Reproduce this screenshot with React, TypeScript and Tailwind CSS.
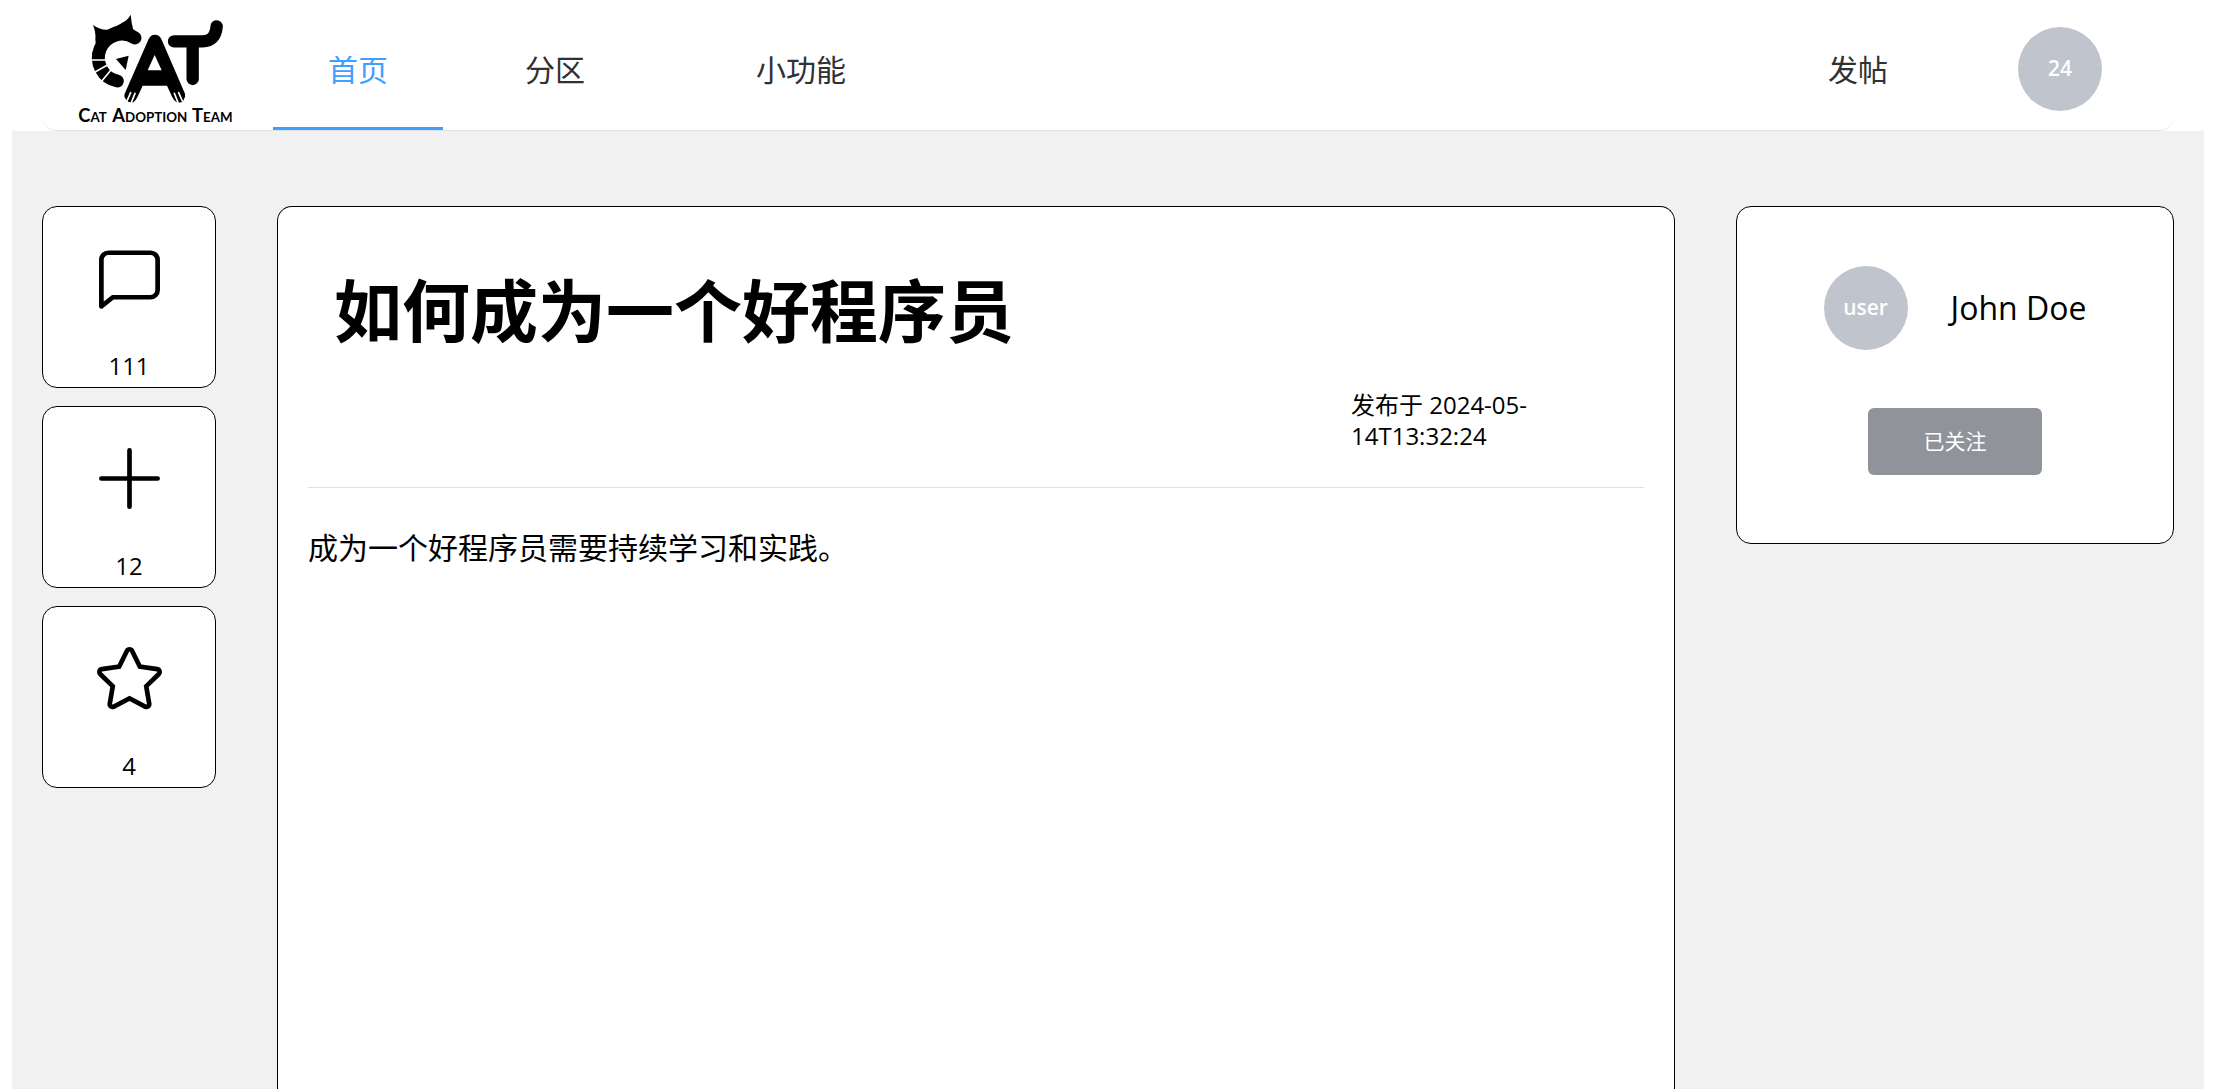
import type { ReactNode } from "react";

function Logo() {
  return (
    <svg viewBox="0 0 510 366" className="h-[122px] w-[170px] shrink-0" role="img" aria-label="Cat Adoption Team">
      {/* C: curled cat with ears, collar stripes and nose */}
      <path d="M195 90A71 71 0 1 0 142 219" fill="none" stroke="#000" strokeWidth="39" strokeLinecap="round" />
      <path d="M69 51Q90 66 112 65L130 57Q150 50 156 44Q172 38 182 20Q184 42 189 62L196 72L150 84L78 120L76 92Q78 74 69 51Z" />
      <path d="M60 156H106M70 195L114 170M95 220L126 182" stroke="#fff" strokeWidth="5" />
      <path d="M138 153L176 143L167 186Z" />
      {/* A: legs with paws */}
      <path
        fillRule="evenodd"
        d="M236 93Q242 80 255 80Q268 80 274 93L345 257Q347 268 342 272Q340 283 331 283Q325 286 318 281Q312 278 307 268L291 233H218L202 268Q197 278 192 281Q186 286 179 282Q171 284 168 274Q161 268 164 257ZM254 141L233 187H275Z"
      />
      <path d="M182 254L171 279M195 256L184 284M326 254L337 279M313 256L324 284" stroke="#fff" strokeWidth="5" strokeLinecap="round" />
      {/* T: tail */}
      <path d="M312 100H398Q436 100 440 55M368 100V213" fill="none" stroke="#000" strokeWidth="37" strokeLinecap="round" />
      <g className="font-['Lato'] font-bold" fontSize="40">
        <text x="25" y="341"><tspan fontSize="55">C</tspan>AT</text>
        <text x="127" y="341"><tspan fontSize="55">A</tspan>DOPTION</text>
        <text x="366" y="341"><tspan fontSize="55">T</tspan>EAM</text>
      </g>
    </svg>
  );
}

const icons = {
  chat: "M273.536 736H800a64 64 0 0 0 64-64V256a64 64 0 0 0-64-64H224a64 64 0 0 0-64 64v570.88L273.536 736zM296 800 147.968 918.4A32 32 0 0 1 96 893.44V256a128 128 0 0 1 128-128h576a128 128 0 0 1 128 128v416a128 128 0 0 1-128 128H296z",
  plus: "M480 480V128a32 32 0 0 1 64 0v352h352a32 32 0 1 1 0 64H544v352a32 32 0 1 1-64 0V544H128a32 32 0 0 1 0-64z",
  star: "m512 747.84 228.16 119.936a6.4 6.4 0 0 0 9.28-6.72l-43.52-254.08 184.512-179.904a6.4 6.4 0 0 0-3.52-10.88l-255.104-37.12L517.76 147.904a6.4 6.4 0 0 0-11.52 0L392.192 379.072l-255.104 37.12a6.4 6.4 0 0 0-3.52 10.88L318.08 606.976l-43.584 254.08a6.4 6.4 0 0 0 9.28 6.72L512 747.84zM313.6 924.48a70.4 70.4 0 0 1-102.144-74.24l37.888-220.928L88.96 472.96A70.4 70.4 0 0 1 128 352.896l221.76-32.256 99.2-200.96a70.4 70.4 0 0 1 126.208 0l99.2 200.96 221.824 32.256a70.4 70.4 0 0 1 39.04 120.064L774.72 629.376l37.888 220.928a70.4 70.4 0 0 1-102.144 74.24L512 820.096l-198.4 104.32z",
};

function ActionCard({ icon, count, label }: { icon: keyof typeof icons; count: number; label: string }) {
  return (
    <button
      type="button"
      aria-label={`${label} ${count}`}
      className="flex h-[182px] flex-col items-center justify-between rounded-[15px] border border-black bg-white pt-[34px] pb-[5px]"
    >
      <svg viewBox="0 0 1024 1024" className="size-[75px]" fill="currentColor" aria-hidden="true">
        <path d={icons[icon]} />
      </svg>
      <span className="text-2xl leading-8">{count}</span>
    </button>
  );
}

function Avatar({ children }: { children: ReactNode }) {
  return (
    <span className="flex size-[84px] shrink-0 items-center justify-center rounded-full bg-[#c0c4cc] text-[21px] text-white">
      {children}
    </span>
  );
}

export default function App() {
  return (
    <div className="flex min-h-screen flex-col bg-white pr-[11px] pl-3 font-['Open_Sans','Noto_Sans_CJK_SC',sans-serif] text-black">
      <header className="mx-[30px] flex h-[131px] items-stretch rounded-[15px] border-b border-[#dcdfe6] pr-[72px] pl-7">
        <a href="#home" className="mt-2 mr-[33px]">
          <Logo />
        </a>
        <nav className="flex flex-1 text-[30px] text-[#303133]">
          <a href="#home" aria-current="page" className="flex w-[170px] items-center justify-center border-b-[3px] border-[#409eff] pt-3 text-[#409eff]">
            首页
          </a>
          <a href="#sections" className="flex w-[224px] items-center justify-center pt-[9px]">
            分区
          </a>
          <a href="#tools" className="flex w-[268px] items-center justify-center pt-[9px]">
            小功能
          </a>
          <a href="#post" className="ml-auto flex w-[170px] items-center justify-center pt-[9px]">
            发帖
          </a>
        </nav>
        <a href="#me" className="ml-[75px] flex items-center pt-2">
          <Avatar>
            <span className="font-semibold">24</span>
          </Avatar>
        </a>
      </header>

      <main className="grid flex-1 grid-cols-[174px_1fr_438px] gap-[61px] bg-[#f1f1f1] px-[30px] pt-[75px]">
        <aside className="flex flex-col gap-[18px]">
          <ActionCard icon="chat" count={111} label="评论" />
          <ActionCard icon="plus" count={12} label="点赞" />
          <ActionCard icon="star" count={4} label="收藏" />
        </aside>

        <article className="flex flex-col rounded-t-[15px] border border-b-0 border-black bg-white px-[30px] pt-[59px]">
          <h1 className="px-[26px] text-[68px] leading-[90px] font-bold">如何成为一个好程序员</h1>
          <div className="flex justify-end pt-[33px] pr-[80px] pb-9">
            <p className="w-[213px] text-2xl leading-[31px]">发布于 2024-05-14T13:32:24</p>
          </div>
          <hr className="border-[#dcdfe6]" />
          <p className="pt-[38px] text-[30px] leading-[44px]">成为一个好程序员需要持续学习和实践。</p>
        </article>

        <aside className="flex h-[338px] flex-col items-center rounded-[15px] border border-black bg-white pt-[59px]">
          <div className="flex items-center gap-[43px]">
            <Avatar>
              <span className="font-semibold">user</span>
            </Avatar>
            <span className="text-[32px]">John Doe</span>
          </div>
          <button type="button" className="mt-[58px] h-[67px] w-[174px] rounded-md bg-[#909399] text-[21px] text-white">
            已关注
          </button>
        </aside>
      </main>
    </div>
  );
}
